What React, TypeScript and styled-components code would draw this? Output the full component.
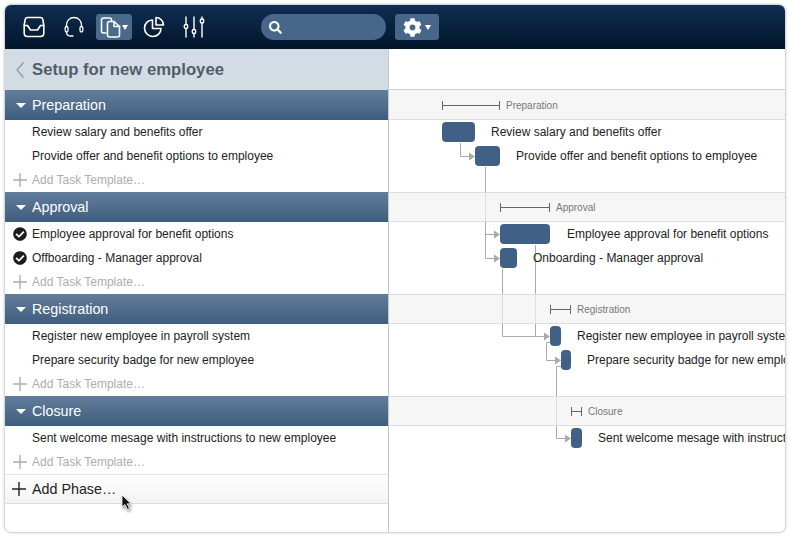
import React from "react";
import styled, { createGlobalStyle } from "styled-components";
import { FaCheckCircle, FaCog, FaSearch } from "react-icons/fa";

const GlobalStyle = createGlobalStyle`
  html, body {
    margin: 0;
    padding: 0;
    background: #fff;
    font-family: "Liberation Sans", Arial, sans-serif;
  }
`;

const Page = styled.div`
  position: relative;
  width: 790px;
  height: 537px;
  padding: 5px;
  box-sizing: border-box;
  overflow: hidden;
`;

const Window = styled.div`
  display: flex;
  flex-direction: column;
  width: 780px;
  height: 527px;
  border-radius: 6px;
  overflow: hidden;
  background: #fff;
  box-shadow: 0 0 3px rgba(0, 0, 0, 0.45);
`;

const Toolbar = styled.div`
  display: flex;
  align-items: center;
  flex: none;
  gap: 4px;
  height: 44px;
  padding-left: 11px;
  background: linear-gradient(#0f2e52, #02152b);
`;

const ToolButton = styled.div<{ $active?: boolean }>`
  display: flex;
  align-items: center;
  justify-content: center;
  width: 36px;
  height: 26px;
  border-radius: 3px;
  color: #fff;
  background: ${(props) => (props.$active ? "#4a6a8c" : "transparent")};
`;

const Caret = styled.span`
  width: 0;
  height: 0;
  margin-left: 1px;
  border-left: 3px solid transparent;
  border-right: 3px solid transparent;
  border-top: 5px solid #fff;
`;

const Search = styled.div`
  display: flex;
  align-items: center;
  width: 125px;
  height: 26px;
  margin-left: 45px;
  padding-left: 8px;
  box-sizing: border-box;
  border-radius: 13px;
  color: #fff;
  background: #47668a;
`;

const GearButton = styled.div`
  display: flex;
  align-items: center;
  justify-content: center;
  gap: 2px;
  width: 44px;
  height: 26px;
  margin-left: 5px;
  border-radius: 3px;
  color: #fff;
  background: #47668a;
`;

const Panes = styled.div`
  display: flex;
  flex: 1;
  min-height: 0;
`;

const LeftPane = styled.div`
  flex: none;
  width: 383px;
  border-right: 1px solid #c4c8cc;
`;

const RightPane = styled.div`
  flex: 1;
  min-width: 0;
  overflow: hidden;
`;

const TitleBar = styled.div`
  display: flex;
  align-items: center;
  height: 41px;
  padding-left: 11px;
  box-sizing: border-box;
  background: #d3dce5;
`;

const Title = styled.h1`
  margin: 0 0 0 8px;
  font-size: 16.7px;
  font-weight: bold;
  color: #525c68;
`;

const PhaseHeader = styled.div`
  display: flex;
  align-items: center;
  height: 30px;
  padding-left: 11px;
  box-sizing: border-box;
  font-size: 14.3px;
  color: #fff;
  background: linear-gradient(#627d9a, #3e5d7e);
`;

const PhaseCaret = styled.span`
  width: 0;
  height: 0;
  margin-right: 6px;
  border-left: 5px solid transparent;
  border-right: 5px solid transparent;
  border-top: 5px solid #fff;
`;

const TaskRow = styled.div<{ $muted?: boolean }>`
  display: flex;
  align-items: center;
  height: 24px;
  font-size: 12px;
  color: ${(props) => (props.$muted ? "#adadad" : "#222")};
`;

const RowIcon = styled.span`
  display: flex;
  align-items: center;
  flex: none;
  width: 19px;
  margin-left: 8px;
  color: #1d1d1f;
`;

const AddPhaseRow = styled.div`
  display: flex;
  align-items: center;
  height: 30px;
  box-sizing: border-box;
  font-size: 14.3px;
  color: #222;
  border-top: 1px solid #e4e4e4;
  border-bottom: 1px solid #dcdcdc;
  background: linear-gradient(#fff, #f3f3f3);

  svg {
    margin-left: -1px;
  }
`;

const ChartTop = styled.div`
  height: 41px;
  box-sizing: border-box;
  border-bottom: 1px solid #cfcfcf;
`;

const ChartBody = styled.div`
  position: relative;
`;

const Connectors = styled.svg`
  position: absolute;
  top: 0;
  left: 0;
`;

const ChartPhase = styled.div<{ $lined: boolean }>`
  position: relative;
  display: flex;
  align-items: center;
  height: 30px;
  box-sizing: border-box;
  border-top: 1px solid ${(props) => (props.$lined ? "#dedede" : "transparent")};
  border-bottom: 1px solid #dedede;
  background: rgba(243, 243, 243, 0.72);
`;

const Bracket = styled.span<{ $left: number; $width: number }>`
  flex: none;
  width: ${(props) => props.$width}px;
  height: 9px;
  margin-left: ${(props) => props.$left}px;
  box-sizing: border-box;
  border-left: 1px solid #666;
  border-right: 1px solid #666;
  background: linear-gradient(#666, #666) center / 100% 1px no-repeat;
`;

const BracketLabel = styled.span`
  margin-left: 6px;
  font-size: 10px;
  color: #777;
`;

const ChartRow = styled.div`
  position: relative;
  display: flex;
  align-items: center;
  height: 24px;
`;

const Bar = styled.span<{ $left: number; $width: number }>`
  flex: none;
  width: ${(props) => props.$width}px;
  height: 20px;
  margin-left: ${(props) => props.$left}px;
  border-radius: 4px;
  background: #406185;
`;

const BarLabel = styled.span<{ $gap: number }>`
  flex: none;
  margin-left: ${(props) => props.$gap}px;
  font-size: 12px;
  white-space: nowrap;
  color: #222;
`;

const Cursor = styled.svg`
  position: absolute;
  top: 494px;
  left: 121px;
  filter: drop-shadow(1px 2px 1.5px rgba(0, 0, 0, 0.45));
`;

interface Task {
  name: string;
  done?: boolean;
  left: number;
  width: number;
  gap: number;
}

interface Phase {
  name: string;
  left: number;
  width: number;
  tasks: Task[];
}

const phases: Phase[] = [
  {
    name: "Preparation",
    left: 53,
    width: 58,
    tasks: [
      { name: "Review salary and benefits offer", left: 53, width: 33, gap: 16 },
      { name: "Provide offer and benefit options to employee", left: 86, width: 25, gap: 16 },
    ],
  },
  {
    name: "Approval",
    left: 111,
    width: 50,
    tasks: [
      { name: "Employee approval for benefit options", done: true, left: 111, width: 50, gap: 17 },
      { name: "Offboarding - Manager approval", done: true, left: 111, width: 17, gap: 16 },
    ],
  },
  {
    name: "Registration",
    left: 161,
    width: 21,
    tasks: [
      { name: "Register new employee in payroll system", left: 161, width: 11, gap: 16 },
      { name: "Prepare security badge for new employee", left: 172, width: 10, gap: 16 },
    ],
  },
  {
    name: "Closure",
    left: 182,
    width: 11,
    tasks: [
      { name: "Sent welcome mesage with instructions to new employee", left: 182, width: 11, gap: 16 },
    ],
  },
];

// chart coordinates, origin at the top left of the phase rows
const links = [
  "M71.5 53V66.5H81",
  "M96.5 77V168.5H106M96.5 144.5H106",
  "M146.5 155V246.5H156",
  "M113.5 179V246.5H156",
  "M161 252.5H157.5V270.5H167",
  "M172 276.5H167.5V348.5H177",
];

const arrows = [
  [86, 66.5],
  [111, 144.5],
  [111, 168.5],
  [161, 246.5],
  [172, 270.5],
  [182, 348.5],
];

const PlusIcon: React.FC<{ size: number; color: string }> = ({ size, color }) => (
  <svg width={size} height={size} viewBox="0 0 14 14">
    <path d="M7 0V14M0 7H14" stroke={color} strokeWidth="1.4" fill="none" />
  </svg>
);

const stroke = {
  fill: "none",
  stroke: "#fff",
  strokeWidth: 1.6,
  strokeLinecap: "round" as const,
  strokeLinejoin: "round" as const,
};

const InboxIcon = () => (
  <svg width="22" height="22" viewBox="0 0 22 22" {...stroke}>
    <path d="M4.5 1.5H17.5C18.6 1.5 19.5 2.3 19.8 3.4L20.8 9V17C20.8 19 19.5 20.5 17.5 20.5H4.5C2.5 20.5 1.2 19 1.2 17V9L2.2 3.4C2.5 2.3 3.4 1.5 4.5 1.5Z" />
    <path d="M1.2 9.5H4.5L7.5 14H14.5L17.5 9.5H20.8" />
  </svg>
);

const HeadsetIcon = () => (
  <svg width="22" height="22" viewBox="0 0 22 22" {...stroke} strokeWidth={1.3}>
    <path d="M3.5 10.5V9C3.5 4.6 6.8 1.5 11 1.5S18.5 4.6 18.5 9V10.5" />
    <rect x="2.2" y="10.5" width="2.8" height="5.5" rx="1.4" />
    <rect x="17" y="10.5" width="2.8" height="5.5" rx="1.4" />
    <path d="M3.5 16C3.5 18.6 5 20 7.5 20H10" />
  </svg>
);

const DocsIcon = () => (
  <svg width="21" height="21" viewBox="0 0 21 21" {...stroke}>
    <path d="M6 16H3.5C2.4 16 1.5 15.1 1.5 14V3C1.5 1.9 2.4 1 3.5 1H9.5C10.6 1 11.5 1.9 11.5 3V4.5" />
    <path d="M7.5 6.5C7.5 5.4 8.4 4.5 9.5 4.5H14L19.5 9.5V18C19.5 19.1 18.6 20 17.5 20H9.5C8.4 20 7.5 19.1 7.5 18Z" />
    <path d="M14 4.5V9.5H19.5" />
  </svg>
);

const PieIcon = () => (
  <svg width="22" height="22" viewBox="0 0 22 22" {...stroke}>
    <path d="M9.5 4C5 4 1.5 7.6 1.5 12C1.5 16.7 5.3 20.5 10 20.5C14.4 20.5 18 17 18 12.5H9.5Z" />
    <path d="M13 1.5V9H20.5C20.5 5 17 1.5 13 1.5Z" />
  </svg>
);

const SlidersIcon = () => (
  <svg width="22" height="22" viewBox="0 0 22 22" {...stroke} strokeWidth={1.4}>
    <path d="M3 1V8.5M3 12.5V21M11 1V13.5M11 17.5V21M19 1V3M19 7V21" />
    <rect x="1.3" y="8.5" width="3.4" height="4" rx="1.5" />
    <rect x="9.3" y="13.5" width="3.4" height="4" rx="1.5" />
    <rect x="17.3" y="3" width="3.4" height="4" rx="1.5" />
  </svg>
);

const App: React.FC = () => {
  return (
    <Page>
      <GlobalStyle />
      <Window>
        <Toolbar>
          <ToolButton>
            <InboxIcon />
          </ToolButton>
          <ToolButton>
            <HeadsetIcon />
          </ToolButton>
          <ToolButton $active>
            <DocsIcon />
            <Caret />
          </ToolButton>
          <ToolButton>
            <PieIcon />
          </ToolButton>
          <ToolButton>
            <SlidersIcon />
          </ToolButton>
          <Search>
            <FaSearch size={13} />
          </Search>
          <GearButton>
            <FaCog size={19} />
            <Caret />
          </GearButton>
        </Toolbar>
        <Panes>
          <LeftPane>
            <TitleBar>
              <svg width="8" height="16" viewBox="0 0 8 16">
                <path d="M7.5 .5L1 8L7.5 15.5" fill="none" stroke="#8b98a6" strokeWidth="1.2" />
              </svg>
              <Title>Setup for new employee</Title>
            </TitleBar>
            {phases.map((phase) => (
              <div key={phase.name}>
                <PhaseHeader>
                  <PhaseCaret />
                  {phase.name}
                </PhaseHeader>
                {phase.tasks.map((task) => (
                  <TaskRow key={task.name}>
                    <RowIcon>{task.done && <FaCheckCircle size={14} />}</RowIcon>
                    {task.name}
                  </TaskRow>
                ))}
                <TaskRow $muted>
                  <RowIcon>
                    <PlusIcon size={14} color="#adadad" />
                  </RowIcon>
                  Add Task Template…
                </TaskRow>
              </div>
            ))}
            <AddPhaseRow>
              <RowIcon>
                <PlusIcon size={14} color="#222" />
              </RowIcon>
              Add Phase…
            </AddPhaseRow>
          </LeftPane>
          <RightPane>
            <ChartTop />
            <ChartBody>
              <Connectors width="396" height="414">
                <path d={links.join("")} fill="none" stroke="#aaa" />
                {arrows.map(([x, y]) => (
                  <polygon
                    key={`${x}-${y}`}
                    points={`${x - 6},${y - 4} ${x},${y} ${x - 6},${y + 4}`}
                    fill="#aaa"
                  />
                ))}
              </Connectors>
              {phases.map((phase, i) => (
                <div key={phase.name}>
                  <ChartPhase $lined={i > 0}>
                    <Bracket $left={phase.left} $width={phase.width} />
                    <BracketLabel>{phase.name}</BracketLabel>
                  </ChartPhase>
                  {phase.tasks.map((task) => (
                    <ChartRow key={task.name}>
                      <Bar $left={task.left} $width={task.width} />
                      <BarLabel $gap={task.gap}>
                        {task.name.replace("Offboarding", "Onboarding")}
                      </BarLabel>
                    </ChartRow>
                  ))}
                  {i < phases.length - 1 && <ChartRow />}
                </div>
              ))}
            </ChartBody>
          </RightPane>
        </Panes>
      </Window>
      <Cursor width="12" height="17" viewBox="0 0 12 17">
        <path d="M1 1V13L4 10.5L6.5 15.5L8.5 14.5L6.2 9.8H10Z" fill="#111" stroke="#fff" strokeWidth=".8" />
      </Cursor>
    </Page>
  );
};

export default App;
